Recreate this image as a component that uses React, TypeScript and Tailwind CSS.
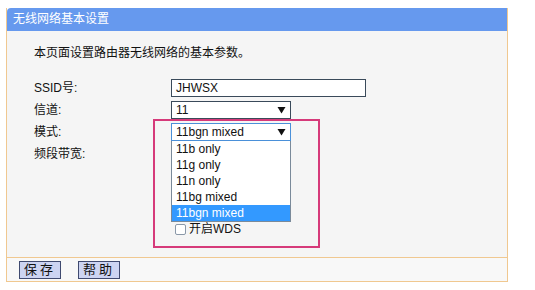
const font = { fontFamily: '"Liberation Sans", "Noto Sans CJK SC", sans-serif' };

const modes = ['11b only', '11g only', '11n only', '11bg mixed', '11bgn mixed'];

function Arrow() {
  return (
    <svg width="9" height="8" viewBox="0 0 9 8" className="mr-[4px]">
      <path d="M0.5 1 L8.5 1 L4.5 7.5 Z" fill="#111" />
    </svg>
  );
}

function Select({ value, focused }: { value: string; focused?: boolean }) {
  return (
    <div
      className={`w-[120px] h-[18px] flex items-center justify-between bg-white border ${
        focused ? 'border-[#4a90d9]' : 'border-[#3a4a5a]'
      } pl-[4px] text-[12px] text-[#111]`}
    >
      <span>{value}</span>
      <Arrow />
    </div>
  );
}

export default function App() {
  return (
    <div className="w-[535px] h-[290px] bg-white pt-[8px] pl-[6px] text-[12px]" style={font}>
      <div className="w-[502px] border-l border-r border-[#f0c890]">
        <div className="h-[23px] bg-[#6699ee] text-white leading-[23px] pl-[6px] rounded-tl-[4px]">
          无线网络基本设置
        </div>
        <div className="relative h-[227px] bg-[#f5f5f5] border-b border-[#f0c890] pl-[27px] pt-[14px] text-[#111]">
          <div className="h-[16px] leading-[16px]">本页面设置路由器无线网络的基本参数。</div>
          <div className="mt-[18px] flex flex-col gap-[4px]">
            <div className="flex items-center h-[18px]">
              <span className="w-[137px]">SSID号:</span>
              <div className="w-[195px] h-[18px] bg-white border border-[#3a4a5a] pl-[4px] leading-[16px]">JHWSX</div>
            </div>
            <div className="flex items-center h-[18px]">
              <span className="w-[137px]">信道:</span>
              <Select value="11" />
            </div>
            <div className="flex items-center h-[18px]">
              <span className="w-[137px]">模式:</span>
              <Select value="11bgn mixed" focused />
            </div>
            <div className="flex items-center h-[18px]">
              <span className="w-[137px]">频段带宽:</span>
            </div>
          </div>

          <div className="absolute left-[168px] top-[189px] flex items-center gap-[3px]">
            <span className="w-[11px] h-[11px] border border-[#8a98a8] bg-white rounded-[2px]" />
            <span>开启WDS</span>
          </div>

          <div className="absolute left-[164px] top-[110px] w-[120px] bg-white border border-[#7a8a9a] border-t-0">
            {modes.map((m, i) => (
              <div
                key={m}
                className={`h-[16px] leading-[16px] pl-[4px] ${
                  i === modes.length - 1 ? 'bg-[#3399ff] text-white' : 'text-[#111]'
                }`}
              >
                {m}
              </div>
            ))}
          </div>

          <div className="absolute left-[146px] top-[88px] w-[167px] h-[129px] border-2 border-[#d63a7a]" />
        </div>
        <div className="h-[24px] bg-[#f8f8f8] border-b border-[#f0c890] flex items-center pl-[12px] gap-[17px]">
          <button className="w-[42px] h-[18px] bg-[#cdd4f2] border border-[#404a70] text-[13px] text-[#111] tracking-[3px] leading-[16px]">
            保存
          </button>
          <button className="w-[42px] h-[18px] bg-[#cdd4f2] border border-[#404a70] text-[13px] text-[#111] tracking-[3px] leading-[16px]">
            帮助
          </button>
        </div>
      </div>
    </div>
  );
}
